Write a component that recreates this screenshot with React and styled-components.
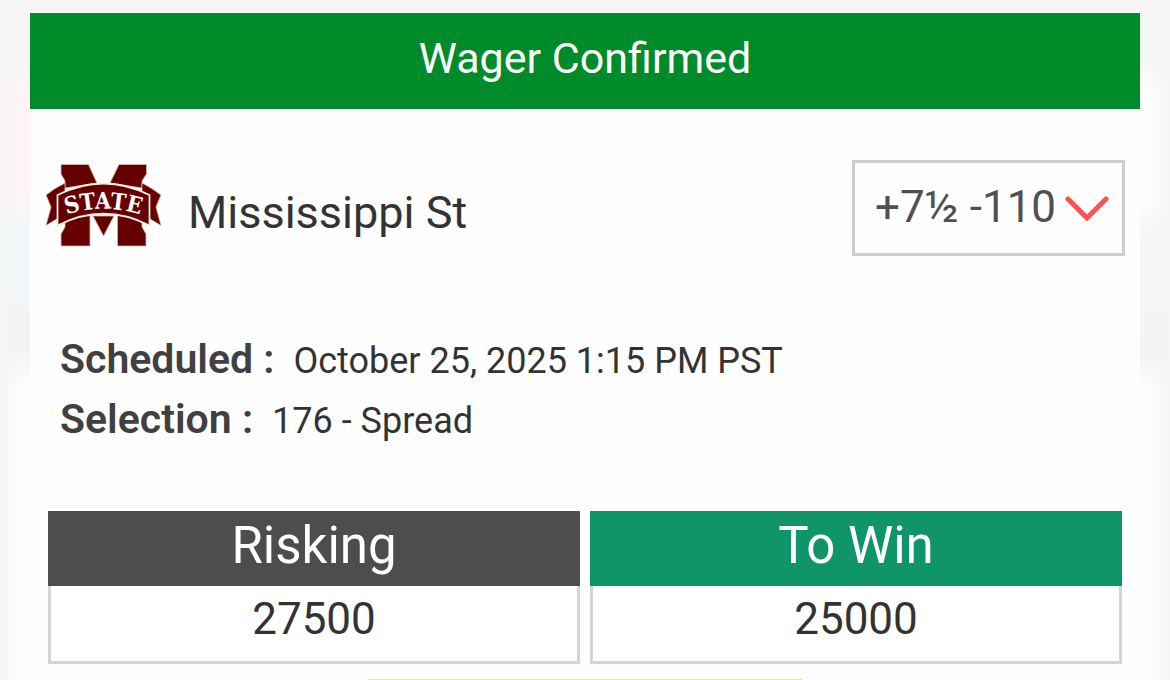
import styled, { createGlobalStyle } from "styled-components";

const GlobalStyle = createGlobalStyle`
  * {
    box-sizing: border-box;
  }

  body {
    margin: 0;
    overflow: hidden;
    background: #fefefe;
    color: #333;
    font-family: Roboto, "Liberation Sans", sans-serif;
  }
`;

function TeamLogo() {
  return (
    <svg width="118" height="88" viewBox="0 0 118 88" role="img" aria-label="Mississippi State">
      <g fill="#660000" stroke="#cbbfae" strokeWidth="0.8">
        <path d="M16 .5H43.5L52 19L20 24V17L16 10Z" />
        <path d="M101.5 .5H74L65 19L97 24V17L101.5 10Z" />
        <path d="M20 56V63L16 70V82H45V48Z" />
        <path d="M97 56V63L101 70V82H72.5V48Z" />
        <path d="M48 52H69L58.5 72Z" />
        <path d="M1 31Q10 24 20 19V50L1 61.5L6 43Z" />
        <path d="M116 31Q107 24 97 19V50L116 61.5L111 43Z" />
      </g>
      <path
        d="M12.5 31Q58.500 8 104.500 31V61.500Q58.500 38 12.500 61.500Z"
        fill="#660000"
        stroke="#f4efe6"
        strokeWidth="1.8"
      />
      <path id="banner" d="M16 52.5Q58.500 37 101 52.500" fill="none" />
      <text
        fill="#fff"
        fontFamily="'DejaVu Serif Condensed', 'Liberation Serif', serif"
        fontSize="23"
        fontWeight="bold"
      >
        <textPath href="#banner" startOffset="50%" textAnchor="middle">STATE</textPath>
      </text>
    </svg>
  );
}

function App() {
  return (
    <Page>
      <GlobalStyle />
      <Slip>
        <Header>Wager Confirmed</Header>
        <TeamRow>
          <TeamLogo />
          <TeamName>Mississippi St</TeamName>
          <OddsBox>
            <OddsSelect aria-label="Odds" defaultValue="spread">
              <option value="spread">+7½ -110</option>
            </OddsSelect>
            <Chevron viewBox="0 0 44 26" aria-hidden="true">
              <path d="M3 3L22 22L41 3" />
            </Chevron>
          </OddsBox>
        </TeamRow>
        <Details>
          <DetailRow>
            <dt>Scheduled :</dt>
            <dd>October 25, 2025 1:15 PM PST</dd>
          </DetailRow>
          <DetailRow>
            <dt>Selection :</dt>
            <dd>176 - Spread</dd>
          </DetailRow>
        </Details>
        <Amounts>
          <Amount $color="#4d4d4d">
            <dt>Risking</dt>
            <dd>27500</dd>
          </Amount>
          <Amount $color="#10946a">
            <dt>To Win</dt>
            <dd>25000</dd>
          </Amount>
        </Amounts>
      </Slip>
      <Divider />
    </Page>
  );
}

const Page = styled.main`
  padding: 13px 30px 0;
  background:
    linear-gradient(#f5f5f6, #f5f5f6) 0 0 / 100% 13px no-repeat,
    linear-gradient(90deg, #f5f5f5, transparent 24px, transparent calc(100% - 24px), #f5f5f5),
    linear-gradient(#f5f5f6 60px, #fff4f5 90px, #fff4f5 200px, #f0f8fd 230px, #f0f8fd 280px, #f4f4f4 310px, #f4f4f4 350px, transparent 390px) 0 0 / 30px 100% no-repeat,
    linear-gradient(#f5f5f6 60px, #fefefe 90px, #fefefe 200px, #f5f6f6 235px, #f4f4f4 360px, #fefefe 390px) 100% 0 / 30px 100% no-repeat,
    #fefefe;
`;

const Slip = styled.section`
  padding-bottom: 15px;
`;

const Header = styled.h1`
  margin: 0;
  height: 96px;
  background: #008b2a;
  color: #fff;
  font-size: 43px;
  font-weight: 400;
  line-height: 90px;
  text-align: center;
`;

const TeamRow = styled.div`
  display: flex;
  align-items: center;
  padding: 51px 15px 0;
`;

const TeamName = styled.h2`
  margin: 0 0 0 25px;
  padding-top: 8px;
  font-size: 45px;
  font-weight: 400;
`;

const OddsBox = styled.div`
  position: relative;
  width: 273px;
  margin-left: auto;
`;

const OddsSelect = styled.select`
  appearance: none;
  display: block;
  width: 100%;
  height: 96px;
  padding: 0 60px 2px 20px;
  border: 3px solid #cecece;
  border-radius: 0;
  background: transparent;
  color: #505050;
  font: 400 44px Roboto, "Liberation Sans", sans-serif;
`;

const Chevron = styled.svg`
  position: absolute;
  top: 36px;
  right: 16px;
  width: 44px;
  pointer-events: none;
  fill: none;
  stroke: #ff5050;
  stroke-width: 5;
  stroke-linecap: round;
`;

const Details = styled.dl`
  margin: 0;
  padding: 73px 30px 0;
`;

const DetailRow = styled.div`
  display: flex;
  align-items: baseline;
  gap: 19px;
  height: 60px;
  line-height: 60px;

  dt {
    color: #404040;
    font-size: 41px;
    font-weight: 600;
  }

  dd {
    margin: 0;
    font-size: 36px;
  }
`;

const Amounts = styled.dl`
  display: grid;
  grid-template-columns: 1fr 1fr;
  gap: 10px;
  margin: 0;
  padding: 62px 18px 0;
`;

const Amount = styled.div`
  text-align: center;

  dt {
    height: 75px;
    background: ${(props) => props.$color};
    color: #fff;
    font-size: 51px;
    line-height: 69px;
  }

  dd {
    height: 78px;
    margin: 0;
    border: 3px solid #d5d5d5;
    border-top: 0;
    background: #fff;
    font-size: 44px;
    line-height: 66px;
  }
`;

const Divider = styled.hr`
  width: 434px;
  height: 1px;
  margin: 0 auto;
  border: 0;
  background: #fbf82a;
`;

export default App;
